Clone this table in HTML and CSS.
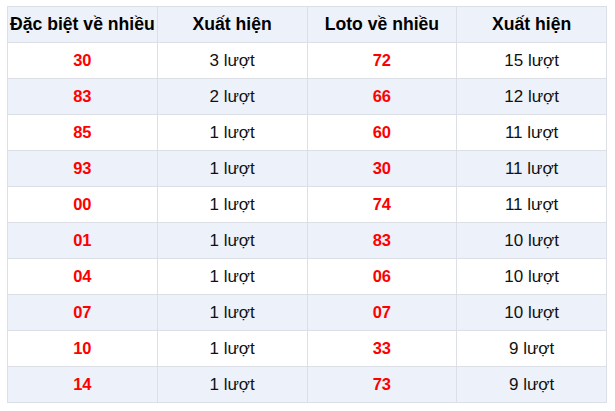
FILE: index.html
```html
<!DOCTYPE html>
<html>
<head>
<meta charset="utf-8">
<link rel="stylesheet" href="styles.css">
</head>
<body>
<table class="stats">
<thead>
<tr><th>Đặc biệt về nhiều</th><th>Xuất hiện</th><th>Loto về nhiều</th><th>Xuất hiện</th></tr>
</thead>
<tbody>
<tr><td class="num">30</td><td>3 lượt</td><td class="num">72</td><td>15 lượt</td></tr>
<tr><td class="num">83</td><td>2 lượt</td><td class="num">66</td><td>12 lượt</td></tr>
<tr><td class="num">85</td><td>1 lượt</td><td class="num">60</td><td>11 lượt</td></tr>
<tr><td class="num">93</td><td>1 lượt</td><td class="num">30</td><td>11 lượt</td></tr>
<tr><td class="num">00</td><td>1 lượt</td><td class="num">74</td><td>11 lượt</td></tr>
<tr><td class="num">01</td><td>1 lượt</td><td class="num">83</td><td>10 lượt</td></tr>
<tr><td class="num">04</td><td>1 lượt</td><td class="num">06</td><td>10 lượt</td></tr>
<tr><td class="num">07</td><td>1 lượt</td><td class="num">07</td><td>10 lượt</td></tr>
<tr><td class="num">10</td><td>1 lượt</td><td class="num">33</td><td>9 lượt</td></tr>
<tr><td class="num">14</td><td>1 lượt</td><td class="num">73</td><td>9 lượt</td></tr>
</tbody>
</table>
</body>
</html>
```
FILE: styles.css
```css
html, body { background: #fff; }
body {
  margin: 6px 0 0 7px;
  font-family: "Liberation Sans", Arial, sans-serif;
  font-size: 17px;
  color: #111;
}
.stats {
  border-collapse: collapse;
  width: 600px;
  table-layout: fixed;
}
.stats th, .stats td {
  border: 1px solid #dcdfe6;
  height: 35px;
  padding: 0;
  text-align: center;
  vertical-align: middle;
}
.stats th {
  background: #edf1f9;
  font-weight: bold;
  font-size: 17.6px;
  color: #000;
}
.stats tbody tr:nth-child(even) td { background: #edf1f9; }
.stats td.num {
  color: #ff0000;
  font-weight: bold;
  font-size: 16.5px;
}
```
